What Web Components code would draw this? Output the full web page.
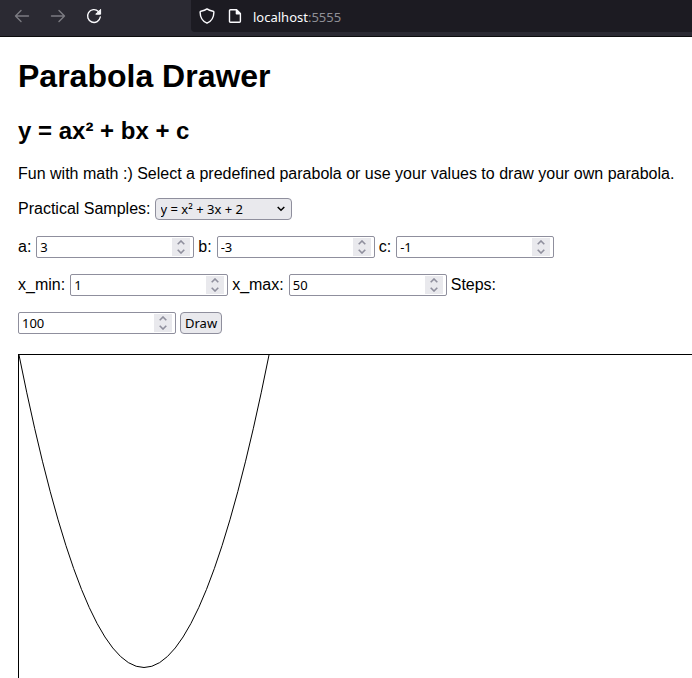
<!DOCTYPE html>
<html lang="en">
<head>
<meta charset="utf-8">
<title>Parabola Drawer</title>
<style>
  html { height: 100%; }
  body { margin: 0; min-height: 100%; display: flex; flex-direction: column; background: #fff; color: #000; font: 16px/18px "Liberation Sans", Arial, sans-serif; }
  parabola-app { flex: 1; }
</style>
</head>
<body>
<browser-bar><span slot="host">localhost</span><span slot="port">:5555</span></browser-bar>
<parabola-app></parabola-app>

<script>
function define(name, html, setup) {
  const template = document.createElement('template');
  template.innerHTML = html;
  customElements.define(name, class extends HTMLElement {
    constructor() {
      super();
      this.attachShadow({ mode: 'open' }).append(template.content.cloneNode(true));
    }
    connectedCallback() { if (setup) setup(this, this.shadowRoot); }
  });
}

define('browser-bar', `
  <style>
    :host { display: flex; height: 36px; background: #2b2a33; border-bottom: 1px solid #0c0c0d; color: #fbfbfe; }
    nav { display: flex; flex: none; width: 177px; padding-left: 14px; gap: 20px; }
    button { display: flex; align-items: center; width: 16px; height: 32px; padding: 0; border: 0; background: none; color: inherit; }
    button:disabled { color: #7c7b82; }
    .address { flex: 1; height: 32px; display: flex; align-items: center; padding-left: 8px; gap: 12px; background: #1c1b22; border-radius: 0 0 0 4px; }
    .url { display: flex; color: #fbfbfe; font: 13px/18px "Noto Sans", sans-serif; padding-top: 2px; margin-left: -2px; }
    .port { color: #8f8f96; }
    svg { display: block; flex: none; fill: none; stroke: currentColor; stroke-width: 1.4; stroke-linecap: round; stroke-linejoin: round; }
  </style>
  <nav aria-label="Browser">
    <button disabled aria-label="Back"><svg width="16" height="16" viewBox="0 0 16 16"><path d="M14.5 8H1.500M7 2.500L1.500 8L7 13.500"/></svg></button>
    <button disabled aria-label="Forward"><svg width="16" height="16" viewBox="0 0 16 16"><path d="M1.500 8h13M9 2.500L14.500 8L9 13.500"/></svg></button>
    <button aria-label="Reload"><svg width="16" height="16" viewBox="0 0 16 16"><path d="M12.400 3.400A6.400 6.400 0 1 0 14.300 9"/><path d="M14.600 1.700V6.200H10.100Z" fill="currentColor" stroke-width="1"/></svg></button>
  </nav>
  <div class="address">
    <svg width="16" height="16" viewBox="0 0 16 16"><path d="M8 .9C6.600 2 4 2.900 1.900 3.300C1.400 3.400 1.100 3.800 1.100 4.300C1.200 8.900 3.300 13.300 8 15.200C12.700 13.300 14.800 8.900 14.900 4.300C14.900 3.800 14.600 3.400 14.100 3.300C12 2.900 9.400 2 8 .9Z"/></svg>
    <svg width="16" height="16" viewBox="0 0 16 16"><path d="M3.500 1.700H9.400L13.400 5.700V13.300Q13.400 14.300 12.400 14.300H3.500Q2.500 14.300 2.500 13.300V2.700Q2.500 1.700 3.500 1.700Z"/><path d="M9.400 1.700V5.700H13.400Z" fill="currentColor"/></svg>
    <div class="url"><slot name="host"></slot><span class="port"><slot name="port"></slot></span></div>
  </div>`);

define('number-field', `
  <style>
    :host { display: contents; }
    label { line-height: 38px; padding-right: 1px; }
    .break { display: none; flex-basis: 100%; }
    :host([stacked]) .break { display: block; }
    .box { box-sizing: border-box; display: flex; align-items: center; width: 158px; height: 22px; margin: 8px 0; padding: 0 3px; border: 1px solid #8f8f9d; border-radius: 2px; background: #fff; }
    input { flex: 1; min-width: 0; height: 20px; padding: 0; border: 0; outline: 0; background: none; color: #000; font: 13px/20px "Noto Sans", sans-serif; appearance: textfield; }
    input::-webkit-inner-spin-button { appearance: none; margin: 0; }
    .spin { display: flex; flex-direction: column; width: 18px; height: 18px; background: #e9e9ed; color: #8f8f9d; }
    button { flex: 1; display: flex; align-items: center; justify-content: center; padding: 0; border: 0; background: none; color: inherit; }
    svg { fill: none; stroke: currentColor; stroke-width: 1.6; }
  </style>
  <label for="value"><slot></slot></label><span class="break"></span>
  <div class="box"><input id="value" type="number"><div class="spin">
    <button type="button" tabindex="-1" aria-label="Increase"><svg width="8" height="5" viewBox="0 0 8 5"><path d="M.7 4.300L4 1L7.300 4.300"/></svg></button>
    <button type="button" tabindex="-1" aria-label="Decrease"><svg width="8" height="5" viewBox="0 0 8 5"><path d="M.7 .7L4 4L7.300 .7"/></svg></button>
  </div></div>`, (host, root) => {
    const input = root.querySelector('input');
    input.value = host.getAttribute('value');
    const [up, down] = root.querySelectorAll('button');
    up.onclick = () => input.stepUp();
    down.onclick = () => input.stepDown();
  });

define('sample-picker', `
  <style>
    :host { display: contents; }
    label { line-height: 38px; }
    .box { display: grid; align-items: center; width: 137px; }
    select, svg { grid-area: 1 / 1; }
    select { box-sizing: border-box; width: 100%; height: 22px; padding: 0 20px 0 5px; border: 1px solid #8f8f9d; border-radius: 4px; appearance: none; background: #e9e9ed; color: #000; font: 13px/20px "Noto Sans", sans-serif; }
    svg { justify-self: end; margin-right: 7px; pointer-events: none; fill: none; stroke: #000; stroke-width: 1.5; }
  </style>
  <label for="sample"><slot></slot></label>
  <div class="box"><select id="sample"><option>y = x² + 3x + 2</option></select>
  <svg width="8" height="6" viewBox="0 0 8 6"><path d="M.7 1L4 4.300L7.300 1"/></svg></div>`);

define('parabola-plot', `
  <style>
    :host { display: block; border: solid #000; border-width: 1px 0 0 1px; overflow: hidden; }
    svg { display: block; width: 100%; height: 100%; fill: none; stroke: #000; }
  </style>
  <svg role="img" aria-label="Parabola"><path d="M0 0Q125 625 250 0"/></svg>`);

define('parabola-app', `
  <style>
    :host { display: flex; flex-direction: column; padding: 21px 0 0 18px; }
    h1 { margin: 0 0 23px; font-size: 32px; line-height: 36px; }
    h2 { margin: 0 0 20px; font-size: 24px; line-height: 28px; }
    p { margin: 0 0 7px; }
    form { display: flex; flex-wrap: wrap; align-items: center; column-gap: 4px; margin-bottom: 12px; }
    .break { flex-basis: 100%; }
    form button { height: 22px; padding: 0 4px; border: 1px solid #8f8f9d; border-radius: 4px; background: #e9e9ed; color: #000; font: 13px/20px "Noto Sans", sans-serif; }
    parabola-plot { flex: 1 0 320px; }
  </style>
  <h1>Parabola Drawer</h1>
  <h2>y = ax² + bx + c</h2>
  <p>Fun with math :) Select a predefined parabola or use your values to draw your own parabola.</p>
  <form>
    <sample-picker>Practical Samples:</sample-picker>
    <span class="break"></span>
    <number-field value="3">a:</number-field>
    <number-field value="-3">b:</number-field>
    <number-field value="-1">c:</number-field>
    <span class="break"></span>
    <number-field value="1">x_min:</number-field>
    <number-field value="50">x_max:</number-field>
    <number-field value="100" stacked>Steps:</number-field>
    <button type="button">Draw</button>
  </form>
  <parabola-plot></parabola-plot>`);
</script>
</body>
</html>
